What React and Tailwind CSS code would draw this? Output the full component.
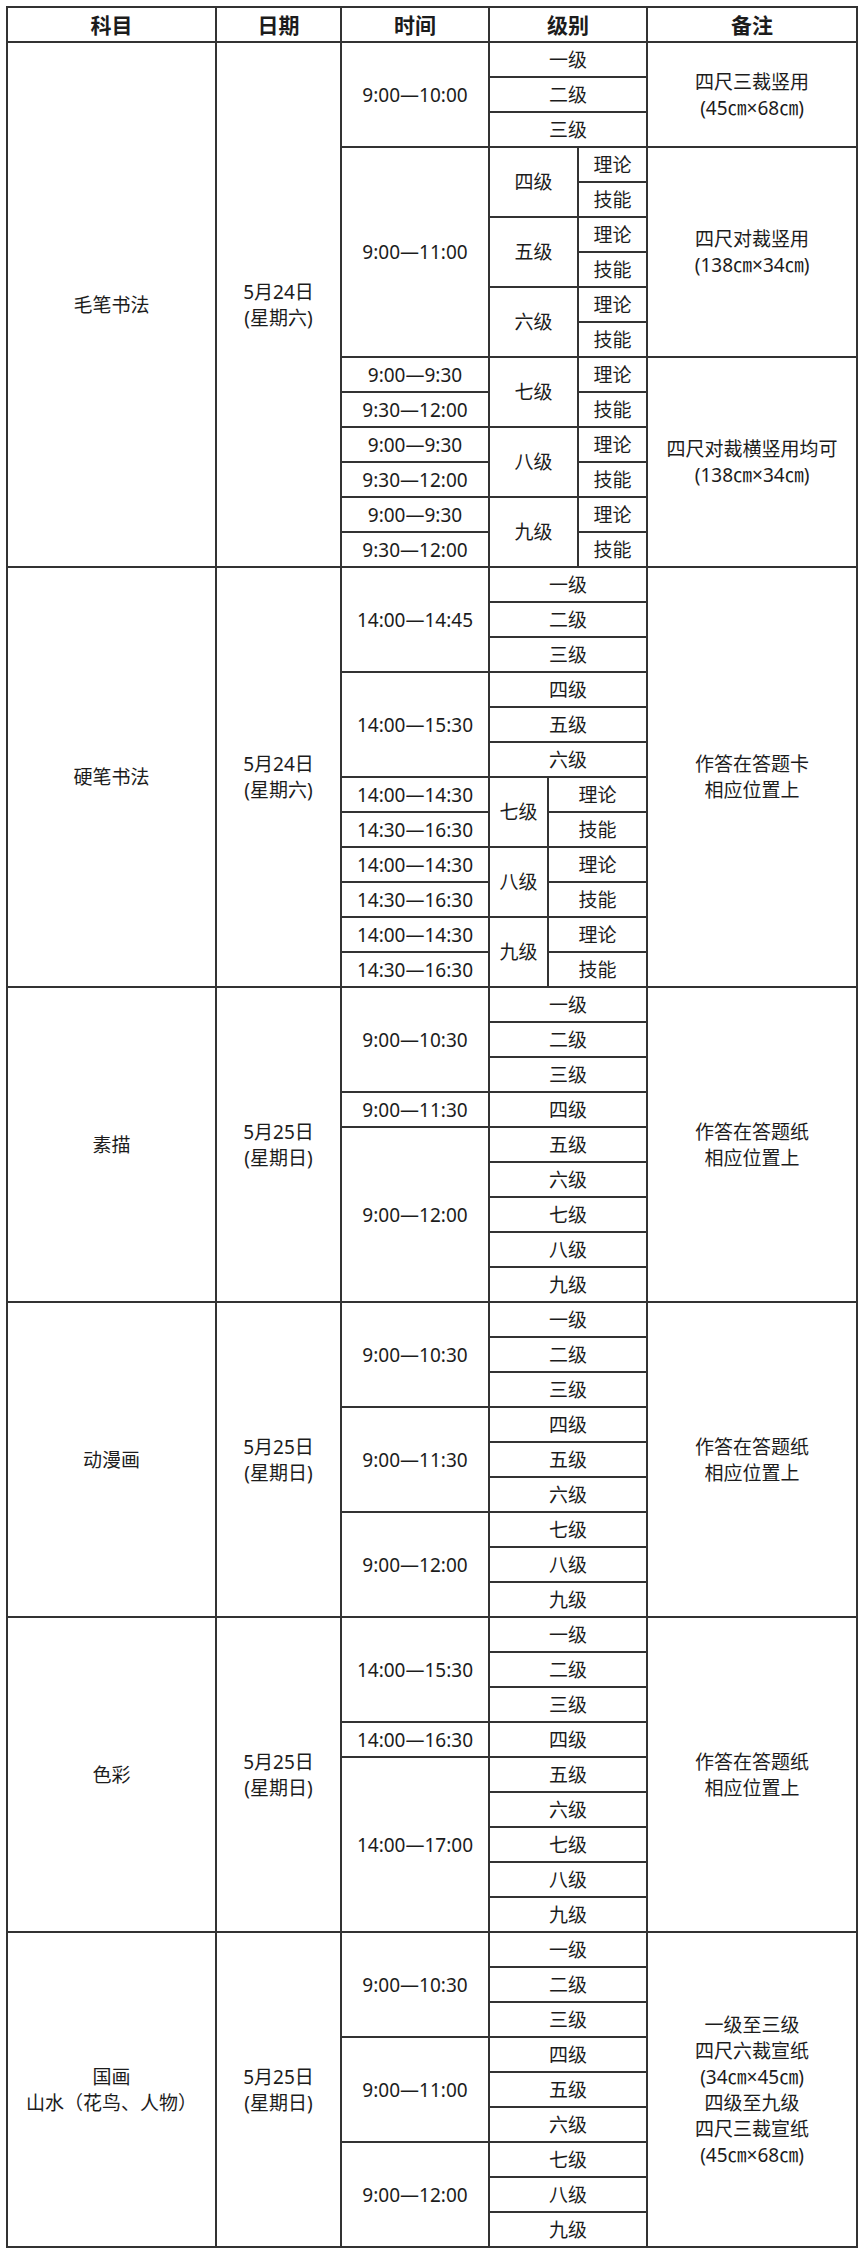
import React from 'react';

// cell helper: text, rowSpan, colSpan
const T = (text, rs = 1, cs = 1) => ({ text, rs, cs });

const SAT = '5月24日\n(星期六)';
const SUN = '5月25日\n(星期日)';
const PAPER = '作答在答题纸\n相应位置上';

const rows = [
  // 毛笔书法
  [T('毛笔书法', 15), T(SAT, 15), T('9:00—10:00', 3), T('一级', 1, 3), T('四尺三裁竖用\n(45㎝×68㎝)', 3)],
  [T('二级', 1, 3)],
  [T('三级', 1, 3)],
  [T('9:00—11:00', 6), T('四级', 2, 2), T('理论'), T('四尺对裁竖用\n(138㎝×34㎝)', 6)],
  [T('技能')],
  [T('五级', 2, 2), T('理论')],
  [T('技能')],
  [T('六级', 2, 2), T('理论')],
  [T('技能')],
  [T('9:00—9:30'), T('七级', 2, 2), T('理论'), T('四尺对裁横竖用均可\n(138㎝×34㎝)', 6)],
  [T('9:30—12:00'), T('技能')],
  [T('9:00—9:30'), T('八级', 2, 2), T('理论')],
  [T('9:30—12:00'), T('技能')],
  [T('9:00—9:30'), T('九级', 2, 2), T('理论')],
  [T('9:30—12:00'), T('技能')],

  // 硬笔书法
  [T('硬笔书法', 12), T(SAT, 12), T('14:00—14:45', 3), T('一级', 1, 3), T('作答在答题卡\n相应位置上', 12)],
  [T('二级', 1, 3)],
  [T('三级', 1, 3)],
  [T('14:00—15:30', 3), T('四级', 1, 3)],
  [T('五级', 1, 3)],
  [T('六级', 1, 3)],
  [T('14:00—14:30'), T('七级', 2), T('理论', 1, 2)],
  [T('14:30—16:30'), T('技能', 1, 2)],
  [T('14:00—14:30'), T('八级', 2), T('理论', 1, 2)],
  [T('14:30—16:30'), T('技能', 1, 2)],
  [T('14:00—14:30'), T('九级', 2), T('理论', 1, 2)],
  [T('14:30—16:30'), T('技能', 1, 2)],

  // 素描
  [T('素描', 9), T(SUN, 9), T('9:00—10:30', 3), T('一级', 1, 3), T(PAPER, 9)],
  [T('二级', 1, 3)],
  [T('三级', 1, 3)],
  [T('9:00—11:30'), T('四级', 1, 3)],
  [T('9:00—12:00', 5), T('五级', 1, 3)],
  [T('六级', 1, 3)],
  [T('七级', 1, 3)],
  [T('八级', 1, 3)],
  [T('九级', 1, 3)],

  // 动漫画
  [T('动漫画', 9), T(SUN, 9), T('9:00—10:30', 3), T('一级', 1, 3), T(PAPER, 9)],
  [T('二级', 1, 3)],
  [T('三级', 1, 3)],
  [T('9:00—11:30', 3), T('四级', 1, 3)],
  [T('五级', 1, 3)],
  [T('六级', 1, 3)],
  [T('9:00—12:00', 3), T('七级', 1, 3)],
  [T('八级', 1, 3)],
  [T('九级', 1, 3)],

  // 色彩
  [T('色彩', 9), T(SUN, 9), T('14:00—15:30', 3), T('一级', 1, 3), T(PAPER, 9)],
  [T('二级', 1, 3)],
  [T('三级', 1, 3)],
  [T('14:00—16:30'), T('四级', 1, 3)],
  [T('14:00—17:00', 5), T('五级', 1, 3)],
  [T('六级', 1, 3)],
  [T('七级', 1, 3)],
  [T('八级', 1, 3)],
  [T('九级', 1, 3)],

  // 国画
  [
    T('国画\n山水（花鸟、人物）', 9),
    T(SUN, 9),
    T('9:00—10:30', 3),
    T('一级', 1, 3),
    T('一级至三级\n四尺六裁宣纸\n(34㎝×45㎝)\n四级至九级\n四尺三裁宣纸\n(45㎝×68㎝)', 9),
  ],
  [T('二级', 1, 3)],
  [T('三级', 1, 3)],
  [T('9:00—11:00', 3), T('四级', 1, 3)],
  [T('五级', 1, 3)],
  [T('六级', 1, 3)],
  [T('9:00—12:00', 3), T('七级', 1, 3)],
  [T('八级', 1, 3)],
  [T('九级', 1, 3)],
];

const cell = 'border-2 border-[#333] p-0 text-center align-middle whitespace-pre-line';

export default function App() {
  return (
    <div className="min-h-[2254px] bg-white pl-[6px] pt-[6px] font-['Noto_Sans','Noto_Sans_CJK_SC',sans-serif] text-[#1c1c1c]">
      <table className="w-[852px] table-fixed border-collapse text-[19px] leading-[26px]">
        <colgroup>
          <col className="w-[209px]" />
          <col className="w-[125px]" />
          <col className="w-[148px]" />
          <col className="w-[59px]" />
          <col className="w-[30px]" />
          <col className="w-[69px]" />
          <col className="w-[210px]" />
        </colgroup>
        <thead>
          <tr className="h-[35px] text-[21px] font-bold">
            <th className={cell}>科目</th>
            <th className={cell}>日期</th>
            <th className={cell}>时间</th>
            <th className={cell} colSpan={3}>级别</th>
            <th className={cell}>备注</th>
          </tr>
        </thead>
        <tbody>
          {rows.map((r, i) => (
            <tr key={i} className="h-[35px]">
              {r.map((c, j) => (
                <td key={j} className={cell} rowSpan={c.rs} colSpan={c.cs}>
                  {c.text}
                </td>
              ))}
            </tr>
          ))}
        </tbody>
      </table>
    </div>
  );
}
